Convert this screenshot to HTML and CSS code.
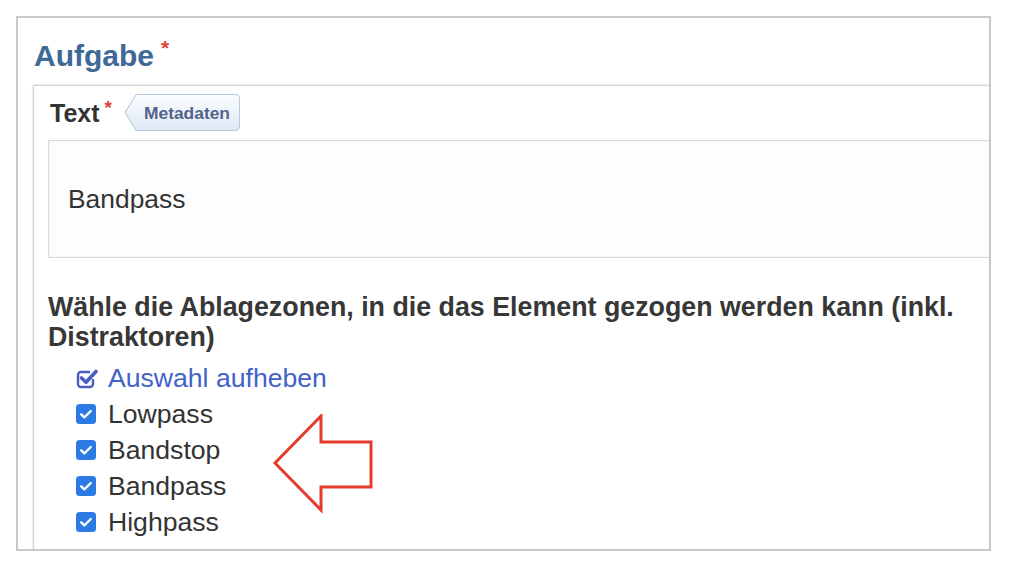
FILE: index.html
```html
<!DOCTYPE html>
<html lang="de">
<head>
<meta charset="utf-8">
<title>Aufgabe</title>
<link rel="stylesheet" href="styles.css">
</head>
<body>
<div class="frame">
  <h2 class="title">Aufgabe<span class="req req-lg">*</span></h2>
  <div class="card">
    <div class="card-head">
      <span class="label">Text<span class="req req-sm">*</span></span>
      <span class="tag">
        <svg class="tag-shape" viewBox="0 0 115 37" preserveAspectRatio="none" aria-hidden="true">
          <defs>
            <linearGradient id="tagGrad" x1="0" y1="0" x2="0" y2="1">
              <stop offset="0" stop-color="#fbfdff"/>
              <stop offset="1" stop-color="#dfe9f5"/>
            </linearGradient>
          </defs>
          <path d="M1 18.5 L12 0.5 H110 Q114.5 0.5 114.5 5 V32 Q114.5 36.5 110 36.5 H12 Z" fill="url(#tagGrad)" stroke="#b7cadf" stroke-width="1"/>
        </svg>
        <span class="tag-text">Metadaten</span>
      </span>
    </div>
    <div class="textbox">Bandpass</div>
    <p class="question">Wähle die Ablagezonen, in die das Element gezogen werden kann (inkl. Distraktoren)</p>
    <ul class="options">
      <li class="opt opt-link">
        <svg class="icon-toggle" viewBox="0 0 22 22" aria-hidden="true">
          <path d="M17 12v5a3 3 0 0 1-3 3H5a3 3 0 0 1-3-3V8a3 3 0 0 1 3-3h9" fill="none" stroke="#4b5ec3" stroke-width="2.4"/>
          <path d="M5.5 11l4.5 4.3L20 4.5" fill="none" stroke="#4b5ec3" stroke-width="3.6" stroke-linecap="round" stroke-linejoin="round"/>
        </svg>
        <span>Auswahl aufheben</span>
      </li>
      <li class="opt">
        <svg class="cb" viewBox="0 0 20 20" aria-hidden="true"><rect x="0" y="0" width="20" height="20" rx="3.5" fill="#2c7be5"/><path d="M5.2 10.3l3.2 3.1L14.8 7" fill="none" stroke="#fff" stroke-width="2.3" stroke-linecap="round" stroke-linejoin="round"/></svg>
        <span>Lowpass</span>
      </li>
      <li class="opt">
        <svg class="cb" viewBox="0 0 20 20" aria-hidden="true"><rect x="0" y="0" width="20" height="20" rx="3.5" fill="#2c7be5"/><path d="M5.2 10.3l3.2 3.1L14.8 7" fill="none" stroke="#fff" stroke-width="2.3" stroke-linecap="round" stroke-linejoin="round"/></svg>
        <span>Bandstop</span>
      </li>
      <li class="opt">
        <svg class="cb" viewBox="0 0 20 20" aria-hidden="true"><rect x="0" y="0" width="20" height="20" rx="3.5" fill="#2c7be5"/><path d="M5.2 10.3l3.2 3.1L14.8 7" fill="none" stroke="#fff" stroke-width="2.3" stroke-linecap="round" stroke-linejoin="round"/></svg>
        <span>Bandpass</span>
      </li>
      <li class="opt">
        <svg class="cb" viewBox="0 0 20 20" aria-hidden="true"><rect x="0" y="0" width="20" height="20" rx="3.5" fill="#2c7be5"/><path d="M5.2 10.3l3.2 3.1L14.8 7" fill="none" stroke="#fff" stroke-width="2.3" stroke-linecap="round" stroke-linejoin="round"/></svg>
        <span>Highpass</span>
      </li>
    </ul>
  </div>
</div>
<svg class="arrow" viewBox="0 0 110 100" aria-hidden="true">
  <path d="M3 49 L49 2 V28 H99 V73 H49 V96 Z" fill="none" stroke="#e53a2c" stroke-width="3" stroke-linejoin="miter"/>
</svg>
</body>
</html>
```
FILE: styles.css
```css
html, body {
  margin: 0;
  padding: 0;
  background: #ffffff;
}

body {
  position: relative;
  width: 1024px;
  height: 571px;
  overflow: hidden;
  font-family: "Liberation Sans", Arial, sans-serif;
  color: #333333;
}

.frame {
  box-sizing: border-box;
  margin: 16px 0 0 16px;
  width: 975px;
  height: 535px;
  border: 2px solid #c9c9c9;
  overflow: hidden;
  background: #ffffff;
}

.title {
  margin: 21px 0 0 16px;
  font-size: 30px;
  line-height: 34px;
  font-weight: bold;
  color: #3e6896;
}

.req {
  color: #e0433a;
  font-weight: bold;
  line-height: 0;
}

.req-lg {
  font-size: 21px;
  margin-left: 7px;
  vertical-align: 11px;
}

.req-sm {
  font-size: 19px;
  margin-left: 5px;
  vertical-align: 8px;
}

.card {
  margin: 12px 0 0 15px;
  width: 1000px;
  padding: 8px 0 60px 14px;
  border: 1px solid #d3d3d3;
  box-shadow: 0 0 2px rgba(0, 0, 0, 0.18), inset 0 0 2px rgba(0, 0, 0, 0.06);
  background: #ffffff;
}

.card-head {
  display: flex;
  align-items: center;
  height: 37px;
}

.label {
  margin-left: 2px;
  font-size: 25px;
  line-height: 28px;
  font-weight: bold;
  color: #333333;
}

.tag {
  position: relative;
  display: inline-flex;
  align-items: center;
  box-sizing: border-box;
  height: 37px;
  width: 116px;
  margin-left: 12px;
  padding-left: 20px;
}

.tag-shape {
  position: absolute;
  left: 0;
  top: 0;
  width: 116px;
  height: 37px;
}

.tag-text {
  position: relative;
  font-size: 17.4px;
  font-weight: bold;
  color: #53638a;
  line-height: 20px;
}

.textbox {
  margin-top: 9px;
  height: 116px;
  display: flex;
  align-items: center;
  padding-left: 19px;
  border: 1px solid #d9d9d9;
  background: #fdfdfd;
  box-shadow: inset 0 0 3px rgba(0, 0, 0, 0.06);
  font-size: 26.4px;
  color: #333333;
}

.question {
  margin: 34px 0 0 0;
  max-width: 940px;
  font-size: 26.8px;
  line-height: 30px;
  font-weight: bold;
  color: #373737;
}

.options {
  list-style: none;
  margin: 8px 0 0 28px;
  padding: 0;
}

.opt {
  display: flex;
  align-items: center;
  height: 36px;
  font-size: 26.6px;
  color: #333333;
}

.opt-link {
  color: #4262c9;
}

.cb {
  width: 20px;
  height: 20px;
  margin-right: 12px;
  flex: none;
}

.icon-toggle {
  width: 22px;
  height: 22px;
  margin-right: 10px;
  flex: none;
}

.arrow {
  position: absolute;
  left: 272px;
  top: 414px;
  width: 110px;
  height: 100px;
}
```
